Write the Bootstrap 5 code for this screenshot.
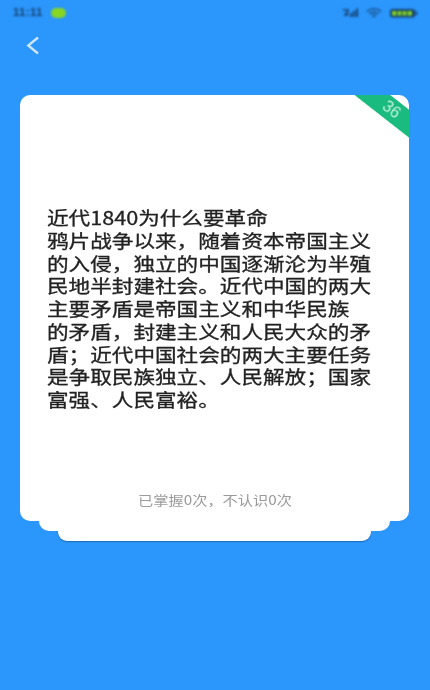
<!DOCTYPE html>
<html lang="zh">
<head>
<meta charset="utf-8">
<title>知识卡片</title>
<link href="https://cdn.jsdelivr.net/npm/bootstrap@5.3.0/dist/css/bootstrap.min.css" rel="stylesheet">
<style>
html,body{height:100%;margin:0}
body{background:#2b96fb;font-family:"Noto Sans CJK SC","Liberation Sans",sans-serif;overflow:hidden}
.phone-screen{width:430px;height:690px;background:#2b96fb}
.status-row{height:25px;padding:0 12px 0 13px;filter:blur(.8px);color:#17406e}
.clock-text{font:700 11.500px/1 "Liberation Sans",sans-serif;letter-spacing:.3px}
.call-pill{width:15px;height:10px;border-radius:5px;background:#86d622}
.back-row{height:70px;padding:11px 0 0 26px}
.back-row svg{display:block;filter:blur(.4px)}
.card-wrap{padding:0 21px 0 20px;filter:blur(.3px)}
.front-sheet{height:426px;background:#fff;border-radius:10px;overflow:hidden;position:relative}
.mid-sheet{height:10px;margin:0 19px;background:#fff;border-radius:0 0 10px 10px}
.back-sheet{height:10px;margin:0 38px;background:#fff;border-radius:0 0 9px 9px;box-shadow:0 1px 1px rgba(20,70,130,.55)}
.sheet-body{padding-top:111px;height:100%}
.study-text{width:275px;margin:0 0 0 27px;transform:scaleX(1.2);transform-origin:0 0;font-size:18px;line-height:22.750px;color:#222;filter:blur(.45px);-webkit-text-stroke:.3px #222;white-space:pre-line}
.tally-text{font-size:13px;line-height:16px;color:#9a9a9a;text-align:center;width:130px;white-space:nowrap;transform:scaleX(1.170);transform-origin:50% 50%;filter:blur(.5px);margin:0 auto;display:flex;justify-content:center}
.tally-row{position:absolute;left:0;right:0;bottom:13px}
.ribbon-band{position:absolute;top:2px;right:-36px;width:112px;height:22px;padding-left:6px;background:#19bb7f;transform:rotate(38deg);color:#c4f0dc;text-align:center;font:400 16px/22px "Liberation Sans",sans-serif;filter:blur(.35px)}
</style>
</head>
<body>
<div class="phone-screen d-flex flex-column">
  <div class="status-row d-flex align-items-center justify-content-between">
    <div class="d-flex align-items-center gap-2">
      <span class="clock-text">11:11</span>
      <span class="call-pill"></span>
    </div>
    <svg width="76" height="12" viewBox="0 0 76 12" aria-label="状态图标">
      <path d="M1 3h5v1.600L3 8h3.500" fill="none" stroke="#17406e" stroke-width="1.600"/>
      <rect x="8" y="6" width="2" height="4" fill="#17406e"/><rect x="11" y="4" width="2" height="6" fill="#17406e"/><rect x="14" y="1.500" width="2" height="8.500" fill="#17406e"/>
      <path d="M25 4.500c4-3.500 10-3.500 14 0M27.500 7c2.500-2 6.500-2 9 0M30.500 9.500c1-1 2-1 3 0" fill="none" stroke="#17406e" stroke-width="1.400"/>
      <rect x="48" y="2" width="25" height="8.500" rx="2.500" fill="#17406e"/>
      <rect x="50" y="4" width="20" height="4.500" fill="#86d622"/>
      <path d="M55 4v4.500M60 4v4.500M65 4v4.500" stroke="#17406e" stroke-width="1.200"/>
      <rect x="73.500" y="4.500" width="1.800" height="3.500" fill="#17406e"/>
    </svg>
  </div>
  <div class="back-row">
    <svg width="14" height="19" viewBox="0 0 14 19" aria-label="返回"><path d="M12 1.500L2.200 9.500 12 17.500" fill="none" stroke="#cfe6ff" stroke-width="2.300"/></svg>
  </div>
  <div class="card-wrap">
    <div class="front-sheet">
      <div class="ribbon-band">36</div>
      <div class="sheet-body">
        <p class="study-text">近代1840为什么要革命</p>
        <p class="study-text">鸦片战争以来，随着资本帝国主义的入侵，独立的中国逐渐沦为半殖民地半封建社会。近代中国的两大主要矛盾是帝国主义和中华民族
的矛盾，封建主义和人民大众的矛盾；近代中国社会的两大主要任务是争取民族独立、人民解放；国家富强、人民富裕。</p>
      </div>
      <div class="tally-row"><div class="tally-text">已掌握0次，不认识0次</div></div>
    </div>
    <div class="mid-sheet"></div>
    <div class="back-sheet"></div>
  </div>
</div>
<script src="https://cdn.jsdelivr.net/npm/bootstrap@5.3.0/dist/js/bootstrap.bundle.min.js"></script>
</body>
</html>
